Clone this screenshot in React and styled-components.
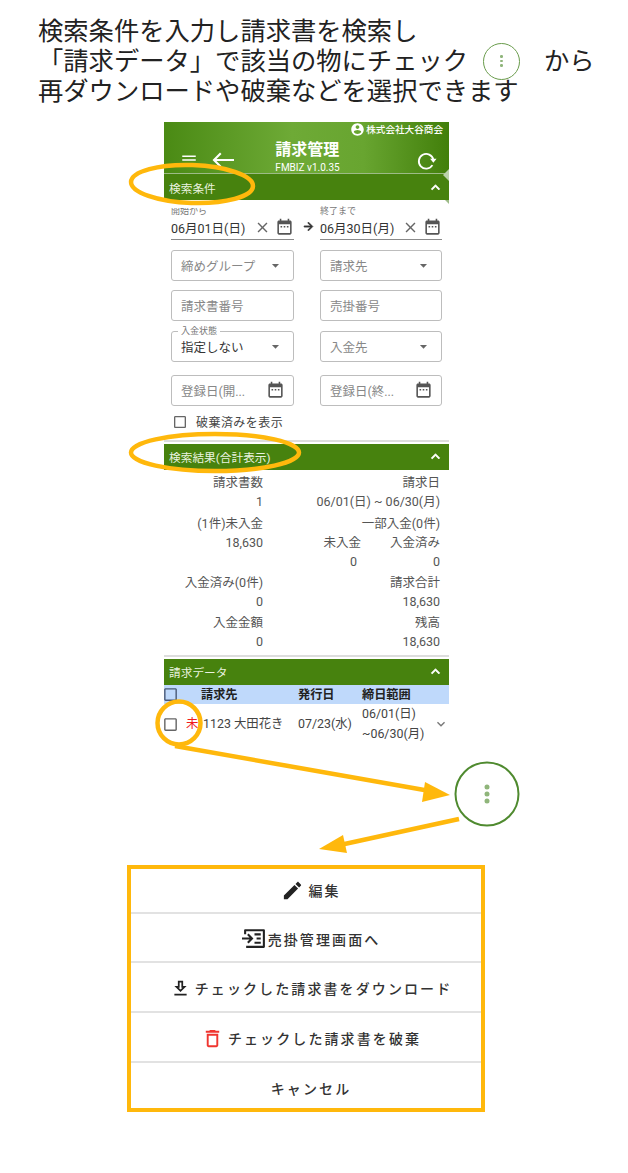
import React from 'react'
import styled, { createGlobalStyle } from 'styled-components'

const sans = `Roboto, "Noto Sans CJK JP", sans-serif`
const callout = '#ffb80c'
const paths = {
  menu: 'M3 18h18v-2H3v2zm0-5h18v-2H3v2zm0-7v2h18V6H3z',
  back: 'M23 11H5.5l5-5L9 4.5 1.5 12 9 19.5l1.5-1.5-5-5H23z',
  account: 'M12 2C6.48 2 2 6.48 2 12s4.48 10 10 10 10-4.48 10-10S17.52 2 12 2zm0 3c1.66 0 3 1.34 3 3s-1.34 3-3 3-3-1.34-3-3 1.34-3 3-3zm0 14.2c-2.5 0-4.71-1.28-6-3.22.03-1.99 4-3.08 6-3.08 1.99 0 5.97 1.09 6 3.08-1.29 1.94-3.5 3.22-6 3.22z',
  calendar: 'M19 3h-1V1h-2v2H8V1H6v2H5c-1.11 0-1.99.9-1.99 2L3 19c0 1.1.89 2 2 2h14c1.1 0 2-.9 2-2V5c0-1.1-.9-2-2-2zm0 16H5V8h14v11zM7 10h2v2H7zm4 0h2v2h-2zm4 0h2v2h-2z',
  edit: 'M3 17.25V21h3.75L17.81 9.94l-3.75-3.75L3 17.25zM20.71 7.04c.39-.39.39-1.02 0-1.41l-2.34-2.34c-.39-.39-1.02-.39-1.41 0l-1.83 1.83 3.75 3.75 1.83-1.83z',
  download: 'M19 9h-4V3H9v6H5l7 7 7-7zm-8 2V5h2v6h1.17L12 13.17 9.83 11H11zm-6 7h14v2H5z',
  trash: 'M6 19c0 1.1.9 2 2 2h8c1.1 0 2-.9 2-2V7H6v12zM8 9h8v10H8V9zm7.5-5l-1-1h-5l-1 1H5v2h14V4z',
  less: 'M12 8l-6 6 1.41 1.41L12 10.83l4.59 4.58L18 14z',
  more: 'M16.59 8.59L12 13.17 7.41 8.59 6 10l6 6 6-6z',
  drop: 'M7 10l5 5 5-5z',
  close: 'M19 6.41L17.59 5 12 10.59 6.41 5 5 6.41 10.59 12 5 17.59 6.41 19 12 13.41 17.59 19 19 17.59 13.41 12z',
  box: 'M19 5v14H5V5h14m0-2H5c-1.1 0-2 .9-2 2v14c0 1.1.9 2 2 2h14c1.1 0 2-.9 2-2V5c0-1.1-.9-2-2-2z',
  arrow: 'M12 4l-1.41 1.41L16.17 11H4v2h12.17l-5.58 5.59L12 20l8-8z',
  ledger: 'M3 3h18a1 1 0 0 1 1 1v16a1 1 0 0 1-1 1H4v-2h16V5H4v3H2V4a1 1 0 0 1 1-1zM0 11h7.2L4.9 8.7 6.3 7.3 11 12l-4.7 4.7-1.4-1.4L7.2 13H0zM12 7h6v2h-6zM14 11h4v2h-4zM12 15h6v2h-6z',
}

const GlobalStyle = createGlobalStyle`
  html, body { margin: 0; background: #fff; }
  body { font-family: ${sans}; }
`

const Page = styled.div`
  position: relative;
  width: 628px;
  height: 1173px;
  overflow: hidden;
  background: #fff;
`
const Intro = styled.p`
  margin: 0;
  padding: 14px 0 0 38px;
  color: #222;
  font: 400 25.3px/30px "Noto Sans CJK JP", sans-serif;
  white-space: nowrap;
`
const Kebab = styled.span`
  display: inline-flex;
  flex-direction: column;
  align-items: center;
  justify-content: center;
  gap: 2px;
  box-sizing: border-box;
  width: 37px;
  height: 37px;
  margin: -12px 24px -8px 15px;
  vertical-align: middle;
  border: 1.5px solid #6a9c4c;
  border-radius: 50%;
  i { width: 2.5px; height: 2.5px; border-radius: 50%; background: #8fb57a; }
`
const Panel = styled.main`
  width: 285px;
  margin: 18px 0 0 164px;
  color: #555;
  font-size: 12.5px;
`
const Header = styled.header`
  display: grid;
  grid-template-columns: 1fr auto 1fr;
  height: 52px;
  box-sizing: border-box;
  position: relative;
  color: #fff;
  border-bottom: 1px solid #9dbb87;
  background: linear-gradient(90deg, #4a8a14 0%, #6eaa36 45%, #68a530 70%, #427f0b 100%);
  /* notches left in the screenshot at the right edge of the bar */
  &::after {
    content: '';
    position: absolute;
    right: 0;
    bottom: -8px;
    border: 6.5px solid transparent;
    border-left: 0;
    border-right: 6px solid #bcd2ab;
  }
  &::before {
    content: '';
    position: absolute;
    right: 0;
    top: 78px;
    border: 2px solid transparent;
    border-top-color: #9dbb87;
    border-right-color: #9dbb87;
  }
`
const Company = styled.div`
  position: absolute;
  top: 0;
  right: 6px;
  display: flex;
  align-items: center;
  gap: 1px;
  font-size: 9.6px;
  line-height: 15px;
  font-weight: 500;
`
const HeaderLeft = styled.div`
  display: flex;
  align-items: center;
  gap: 13px;
  padding: 26px 0 6px 16px;
`
const Title = styled.div`
  padding-top: 18px;
  margin-left: 2px;
  font-size: 16px;
  line-height: 20px;
  font-weight: 700;
  small { display: block; font-size: 10px; line-height: 10px; font-weight: 400; margin-top: 3px; }
`
const HeaderRight = styled.div`
  display: flex;
  justify-content: flex-end;
  align-items: flex-end;
  padding: 0 12px 6px 0;
`
const Icon = styled.svg`
  display: block;
  flex: none;
  width: ${p => p.$size || 18}px;
  height: ${p => p.$size || 18}px;
  margin-left: ${p => p.$shift || 0}px;
  fill: ${p => p.$color || 'currentColor'};
  stroke: ${p => p.$bold ? (p.$color || 'currentColor') : 'none'};
  stroke-width: ${p => p.$bold || 0};
`
const Bar = styled.div`
  display: flex;
  align-items: center;
  justify-content: space-between;
  height: 26px;
  padding: 0 5px 0 5px;
  color: #e9f2df;
  background: #47820e;
  font-size: 11.7px;
`
const Form = styled.section`
  display: grid;
  grid-template-columns: 123px 122px;
  column-gap: 26px;
  row-gap: 9.5px;
  padding: 5px 6px 0 7px;
`
const DateField = styled.div`
  position: relative;
  height: 35px;
  box-sizing: border-box;
  border-bottom: 1px solid #8a8a8a;
`
const DateLabel = styled.label`
  display: block;
  color: #777;
  font-size: 9px;
  line-height: 12px;
  clip-path: ${p => p.$clipped ? 'inset(3px 0 0 0)' : 'none'};
`
const DateRow = styled.div`
  display: flex;
  align-items: center;
  gap: 4px;
  height: 20px;
  color: #333;
  font-size: 12.5px;
  span { flex: 1; white-space: nowrap; }
`
const DateArrow = styled.div`
  position: absolute;
  top: 15px;
  right: -21px;
  color: #333;
`
const Box = styled.div`
  position: relative;
  display: flex;
  align-items: center;
  justify-content: space-between;
  height: 31px;
  margin-top: ${p => p.$top || 0}px;
  box-sizing: border-box;
  padding: 0 ${p => p.$icon ? p.$icon : 9}px 0 9px;
  border: 1px solid #bdbdbd;
  border-radius: 3px;
  color: ${p => p.$filled ? '#333' : '#888'};
  font-size: 12.5px;
  white-space: nowrap;
`
const Legend = styled.span`
  position: absolute;
  top: -6px;
  left: 6px;
  padding: 0 3px;
  background: #fff;
  color: #777;
  font-size: 9px;
  line-height: 11px;
`
const CheckRow = styled.label`
  display: flex;
  align-items: center;
  gap: 8px;
  height: 18px;
  margin: 7px 0 0 8px;
  color: #444;
  font-size: 12px;
  letter-spacing: 0.45px;
`
const Rule = styled.hr`
  height: 2px;
  margin: ${p => p.$top || 0}px 0 2px;
  border: 0;
  background: #ddd;
`
const Summary = styled.section`
  display: grid;
  grid-template-columns: 99px 177px;
  grid-auto-rows: 19px;
  padding: 3px 0 11px;
  line-height: 19px;
  text-align: right;
`
const Cell = styled.div`
  margin-top: ${p => p.$top || 0}px;
  white-space: nowrap;
`
const Split = styled.div`
  display: flex;
  justify-content: flex-end;
  gap: ${p => p.$gap}px;
`
const TableHead = styled.div`
  display: grid;
  grid-template-columns: 37px 97px 64px 1fr;
  align-items: center;
  height: 19px;
  background: #bfd9fb;
  color: #222;
  font-size: 12.2px;
  font-weight: 700;
`
const TableRow = styled.div`
  display: grid;
  grid-template-columns: 22px 17px 95px 64px 1fr 16px;
  align-items: center;
  height: 41px;
  color: #444;
  font-size: 12.4px;
  white-space: nowrap;
  line-height: 20px;
`
const Unpaid = styled.span`
  color: #f01c1c;
`
const Dialog = styled.section`
  width: 358px;
  height: 247px;
  box-sizing: border-box;
  margin: 120px 0 0 127px;
  border: 4px solid ${callout};
  display: grid;
  grid-template-rows: 45px 49px 50px 50px 1fr;
`
const Action = styled.button`
  display: flex;
  align-items: center;
  justify-content: center;
  gap: ${p => p.$gap || 3}px;
  padding: ${p => p.$pad ?? 3}px 0 0 10px;
  border: 0;
  border-bottom: ${p => p.$last ? 0 : '2px solid #e2e2e2'};
  background: #fff;
  color: #333;
  font: 500 14px ${sans};
  letter-spacing: 2.1px;
  white-space: nowrap;
`
const Overlay = styled.svg`
  position: absolute;
  inset: 0;
  width: 628px;
  height: 1173px;
  pointer-events: none;
`

const Glyph = ({ name, size, color, bold, shift }) => (
  <Icon viewBox="0 0 24 24" $size={size} $color={color} $bold={bold} $shift={shift}><path d={paths[name]} /></Icon>
)

const RefreshIcon = () => (
  <Icon viewBox="0 0 24 24" $size={22}>
    <path d="M19 16.5A8 8 0 1 1 20 10.5" fill="none" stroke="currentColor" strokeWidth="2" />
    <path d="M16.5 9.5H23.5L20 14z" />
  </Icon>
)

const DateInput = ({ label, value, arrow, clipped }) => (
  <DateField>
    <DateLabel $clipped={clipped}>{label}</DateLabel>
    <DateRow>
      <span>{value}</span>
      <Glyph name="close" size={17} color="#666" />
      <Glyph name="calendar" size={19} color="#555" />
    </DateRow>
    {arrow && <DateArrow><Glyph name="arrow" size={13} bold={1.5} /></DateArrow>}
  </DateField>
)

const Select = ({ children, legend, filled }) => (
  <Box $icon={9} $filled={filled}>
    {legend && <Legend>{legend}</Legend>}
    {children}
    <Glyph name="drop" size={17} color="#666" />
  </Box>
)

const SectionBar = ({ children }) => (
  <Bar>{children}<Glyph name="less" size={17} color="#fff" bold={1} /></Bar>
)

const Callouts = () => (
  <Overlay viewBox="0 0 628 1173">
    <g fill="none" stroke={callout} strokeWidth="4.5">
      <ellipse cx="192" cy="184" rx="61" ry="19" transform="rotate(2 192 184)" />
      <ellipse cx="215" cy="452.5" rx="84" ry="18.5" />
      <circle cx="179" cy="723" r="21.5" />
      <path d="M175 746L430 791" />
      <path d="M459 819L340 845" />
    </g>
    <g fill={callout}>
      <path d="M450 795L425 782L422 802z" />
      <path d="M319 849L343 835L347 853z" />
    </g>
    <circle cx="487" cy="794" r="31.5" fill="#fff" stroke="#4f8a2f" strokeWidth="2" />
    <g fill="#8fb57a">
      <circle cx="487" cy="787" r="2.5" />
      <circle cx="487" cy="794" r="2.5" />
      <circle cx="487" cy="801" r="2.5" />
    </g>
  </Overlay>
)

export default function App() {
  return (
    <Page>
      <GlobalStyle />
      <Intro>
        検索条件を入力し請求書を検索し<br />
        「請求データ」で該当の物にチェック<Kebab><i /><i /><i /></Kebab>から<br />
        再ダウンロードや破棄などを選択できます
      </Intro>
      <Panel>
        <Header>
          <Company><Glyph name="account" size={15} />株式会社大谷商会</Company>
          <HeaderLeft>
            <Glyph name="menu" size={18} />
            <Glyph name="back" size={24} />
          </HeaderLeft>
          <Title>請求管理<small>FMBIZ v1.0.35</small></Title>
          <HeaderRight><RefreshIcon /></HeaderRight>
        </Header>
        <SectionBar>検索条件</SectionBar>
        <Form>
          <DateInput label="開始から" value="06月01日(日)" arrow clipped />
          <DateInput label="終了まで" value="06月30日(月)" />
          <Select>締めグループ</Select>
          <Select>請求先</Select>
          <Box>請求書番号</Box>
          <Box>売掛番号</Box>
          <Select legend="入金状態" filled>指定しない</Select>
          <Select>入金先</Select>
          <Box $icon={8} $top={3.5}>登録日(開...<Glyph name="calendar" size={19} color="#555" /></Box>
          <Box $icon={8} $top={3.5}>登録日(終...<Glyph name="calendar" size={19} color="#555" /></Box>
        </Form>
        <CheckRow><Glyph name="box" size={16} color="#666" />破棄済みを表示</CheckRow>
        <Rule $top={9} />
        <SectionBar>検索結果(合計表示)</SectionBar>
        <Summary>
          <Cell>請求書数</Cell><Cell>請求日</Cell>
          <Cell>1</Cell><Cell>06/01(日) ~ 06/30(月)</Cell>
          <Cell $top={3}>(1件)未入金</Cell><Cell $top={3}>一部入金(0件)</Cell>
          <Cell $top={3}>18,630</Cell><Cell $top={3}><Split $gap={29}><span>未入金</span><span>入金済み</span></Split></Cell>
          <Cell /><Cell $top={3}><Split $gap={76}><span>0</span><span>0</span></Split></Cell>
          <Cell $top={5}>入金済み(0件)</Cell><Cell $top={5}>請求合計</Cell>
          <Cell $top={5}>0</Cell><Cell $top={5}>18,630</Cell>
          <Cell $top={7}>入金金額</Cell><Cell $top={7}>残高</Cell>
          <Cell $top={7}>0</Cell><Cell $top={7}>18,630</Cell>
        </Summary>
        <Rule />
        <SectionBar>請求データ</SectionBar>
        <TableHead>
          <Glyph name="box" size={17} color="#4a5a78" shift={-2} />
          <span>請求先</span><span>発行日</span><span>締日範囲</span>
        </TableHead>
        <TableRow>
          <Glyph name="box" size={17} color="#666" shift={-2} />
          <Unpaid>未</Unpaid>
          <span>1123 大田花き</span>
          <span>07/23(水)</span>
          <span>06/01(日)<br />~06/30(月)</span>
          <Glyph name="more" size={16} color="#777" />
        </TableRow>
      </Panel>
      <Dialog>
        <Action $gap={4} $pad={0}><Glyph name="edit" size={23} color="#222" />編集</Action>
        <Action $gap={1}><Glyph name="ledger" size={25} color="#222" />売掛管理画面へ</Action>
        <Action $gap={4}><Glyph name="download" size={21} color="#222" />チェックした請求書をダウンロード</Action>
        <Action $gap={4}><Glyph name="trash" size={23} color="#f0352f" />チェックした請求書を破棄</Action>
        <Action $last $pad={5}>キャンセル</Action>
      </Dialog>
      <Callouts />
    </Page>
  )
}
